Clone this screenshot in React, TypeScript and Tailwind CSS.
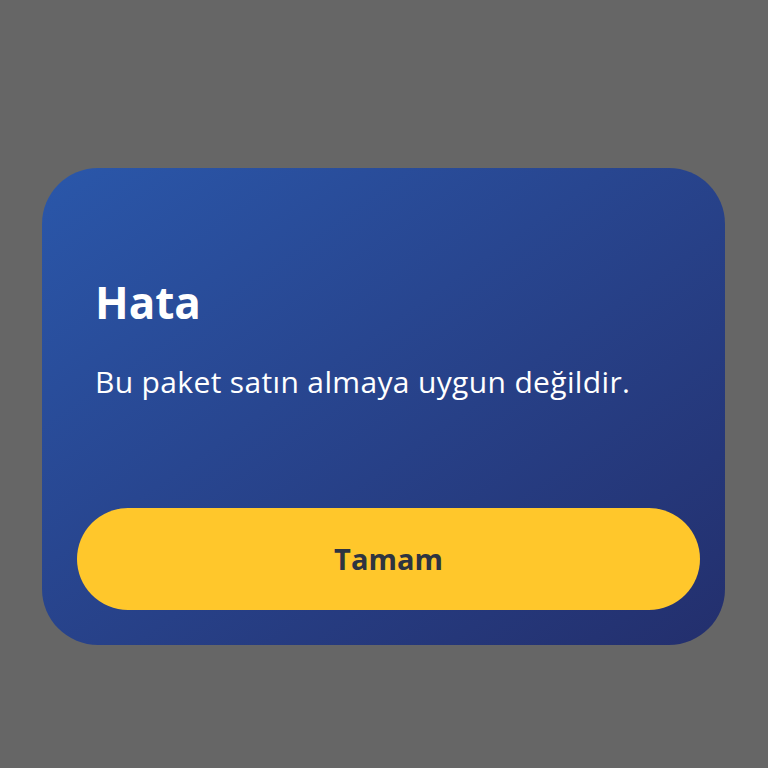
import React from "react";

export default function App() {
  return (
    <div
      className="w-[768px] h-[768px] bg-[#666666] flex items-start pt-[168px] pl-[42px]"
      style={{ fontFamily: "'Open Sans', 'Noto Sans', sans-serif" }}
    >
      <div className="w-[683px] h-[477px] rounded-[56px] bg-gradient-to-br from-[#2a57aa] to-[#232f6d] flex flex-col pl-[53px] pr-[25px] pt-[106px]">
        <h1 className="text-white font-bold text-[44px] leading-[56px]">Hata</h1>
        <p className="text-white text-[30px] leading-[36px] mt-[34px] tracking-[0.35px]">Bu paket satın almaya uygun değildir.</p>
        <button className="mt-[108px] -ml-[18px] w-[623px] h-[102px] rounded-full bg-[#ffc72b] text-[#2e3441] font-bold text-[29px] flex items-center justify-center">
          Tamam
        </button>
      </div>
    </div>
  );
}
